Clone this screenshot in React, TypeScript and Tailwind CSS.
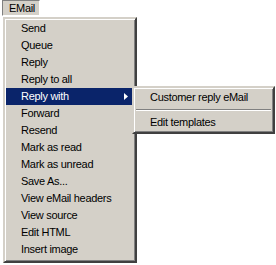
const items = [
  "Send",
  "Queue",
  "Reply",
  "Reply to all",
  "Reply with",
  "Forward",
  "Resend",
  "Mark as read",
  "Mark as unread",
  "Save As...",
  "View eMail headers",
  "View source",
  "Edit HTML",
  "Insert image",
];

const winBorder =
  "border-2 border-t-[#d4d0c8] border-l-[#d4d0c8] border-r-[#404040] border-b-[#404040] shadow-[inset_1px_1px_0_#ffffff,inset_-1px_-1px_0_#808080]";

const Arrow = ({ white }: { white?: boolean }) => (
  <svg width="4" height="7" viewBox="0 0 4 7" className="absolute right-[6px] top-[5px]">
    <path d="M0 0 L4 3.5 L0 7 Z" fill={white ? "#ffffff" : "#000000"} />
  </svg>
);

export default function App() {
  return (
    <div className="relative h-[265px] w-[276px] overflow-hidden bg-white font-['Liberation_Sans',Arial,sans-serif] text-[11px] tracking-[-0.3px] text-black">
      <div className="flex">
        <div className="ml-[2px] flex h-[16px] w-[38px] items-center border border-t-[#808080] border-l-[#808080] border-r-white border-b-white bg-[#d4d0c8] pl-[6px] leading-none">
          EMail
        </div>
      </div>
      <div className={`ml-[3px] mt-[1px] w-[134px] bg-[#d4d0c8] px-[1px] pt-[1px] pb-[3px] ${winBorder}`}>
        {items.map((label) => {
          const active = label === "Reply with";
          return (
            <div
              key={label}
              className={`relative flex h-[17px] items-center pl-[15px] leading-none ${
                active ? "bg-[#0a246a] text-white" : ""
              }`}
            >
              {label}
              {active && <Arrow white />}
            </div>
          );
        })}
      </div>

      <div className={`absolute left-[132px] top-[86px] w-[143px] bg-[#d4d0c8] p-[1px] ${winBorder}`}>
        <div className="flex h-[17px] items-center pl-[15px] leading-none">Customer reply eMail</div>
        <div className="flex h-[8px] items-center px-[1px]">
          <div className="h-[2px] w-full border-t border-t-[#808080] border-b border-b-white" />
        </div>
        <div className="flex h-[17px] items-center pl-[15px] leading-none">Edit templates</div>
      </div>
    </div>
  );
}
